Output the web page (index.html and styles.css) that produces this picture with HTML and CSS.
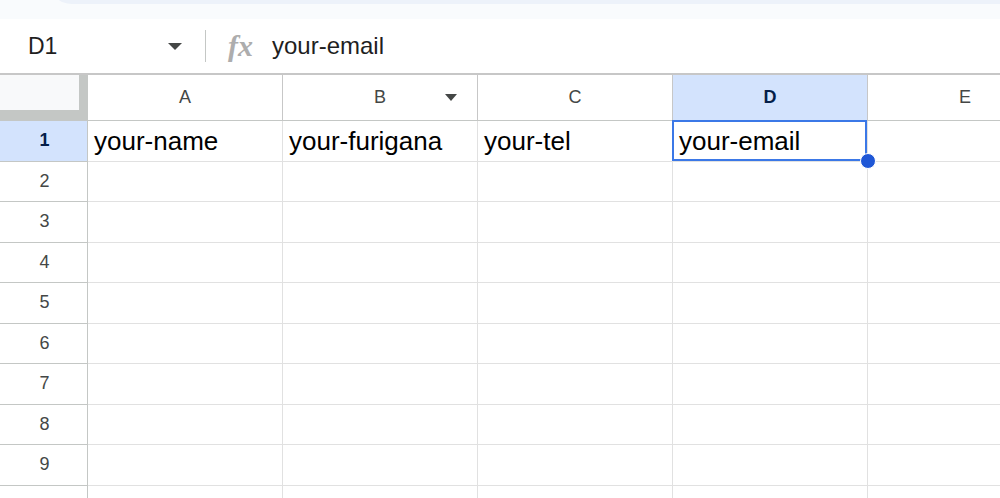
FILE: index.html
```html
<!DOCTYPE html>
<html>
<head>
<meta charset="utf-8">
<link rel="stylesheet" href="styles.css">
</head>
<body>
<div class="app">
  <div class="top"><div class="toolbar"></div></div>
  <div class="fbar">
    <div class="namebox"><span class="ref">D1</span><span class="tri"></span></div>
    <div class="sep"></div>
    <div class="fx">fx</div>
    <div class="formula">your-email</div>
  </div>
  <div class="grid">
    <div class="corner"></div>
    <div class="ch">A</div>
    <div class="ch ch-menu"><span></span><span class="ltr">B</span><span class="tri small"></span></div>
    <div class="ch">C</div>
    <div class="ch sel">D</div>
    <div class="ch">E</div>

    <div class="rh sel">1</div>
    <div class="c">your-name</div>
    <div class="c">your-furigana</div>
    <div class="c">your-tel</div>
    <div class="c active">your-email<span class="box"></span><span class="dot"></span></div>
    <div class="c"></div>

    <div class="rh">2</div><div class="c"></div><div class="c"></div><div class="c"></div><div class="c"></div><div class="c"></div>
    <div class="rh">3</div><div class="c"></div><div class="c"></div><div class="c"></div><div class="c"></div><div class="c"></div>
    <div class="rh">4</div><div class="c"></div><div class="c"></div><div class="c"></div><div class="c"></div><div class="c"></div>
    <div class="rh">5</div><div class="c"></div><div class="c"></div><div class="c"></div><div class="c"></div><div class="c"></div>
    <div class="rh">6</div><div class="c"></div><div class="c"></div><div class="c"></div><div class="c"></div><div class="c"></div>
    <div class="rh">7</div><div class="c"></div><div class="c"></div><div class="c"></div><div class="c"></div><div class="c"></div>
    <div class="rh">8</div><div class="c"></div><div class="c"></div><div class="c"></div><div class="c"></div><div class="c"></div>
    <div class="rh">9</div><div class="c"></div><div class="c"></div><div class="c"></div><div class="c"></div><div class="c"></div>
    <div class="rh">10</div><div class="c"></div><div class="c"></div><div class="c"></div><div class="c"></div><div class="c"></div>
  </div>
</div>
</body>
</html>
```

FILE: styles.css
```css
* { box-sizing: border-box; }
html, body { margin: 0; padding: 0; background: #fff; }
.app {
  width: 1000px;
  height: 498px;
  overflow: hidden;
  font-family: "Liberation Sans", Arial, sans-serif;
}
.top {
  height: 19px;
  background: #f9fbfd;
  overflow: hidden;
}
.toolbar {
  height: 28px;
  margin-top: -24px;
  margin-left: 48px;
  background: #edf2fa;
  border-bottom-left-radius: 24px;
}
.fbar {
  height: 56px;
  display: flex;
  align-items: center;
  border-bottom: 2px solid #c7c7c7;
  background: #fff;
}
.namebox {
  width: 182px;
  padding-left: 28px;
  display: flex;
  align-items: center;
  justify-content: space-between;
  font-size: 23px;
  color: #1f1f1f;
}
.tri {
  width: 0;
  height: 0;
  border-left: 7px solid transparent;
  border-right: 7px solid transparent;
  border-top: 7px solid #444746;
}
.tri.small {
  border-left-width: 6.5px;
  border-right-width: 6.5px;
  border-top-width: 7px;
  justify-self: end;
  margin-right: 20px;
}
.sep {
  width: 1px;
  height: 32px;
  margin-left: 23px;
  background: #c4c7c5;
}
.fx {
  margin-left: 22px;
  font-family: "Liberation Serif", "DejaVu Serif", serif;
  font-style: italic;
  font-weight: bold;
  font-size: 30px;
  color: #adadad;
  line-height: 1;
  width: 26px;
}
.formula {
  margin-left: 18px;
  font-size: 24px;
  color: #1f1f1f;
}
.grid {
  display: grid;
  grid-template-columns: 88px repeat(5, 195px);
  grid-template-rows: 46px repeat(10, 40.5px);
}
.corner {
  background: #f8f9fa;
  border-right: 9px solid #c4c7c5;
  border-bottom: 11px solid #c4c7c5;
}
.ch {
  display: flex;
  align-items: center;
  justify-content: center;
  font-size: 18px;
  color: #444746;
  border-right: 1px solid #c7c7c7;
  border-bottom: 1px solid #c4c7c5;
  background: #fff;
}
.ch-menu {
  display: grid;
  grid-template-columns: 1fr auto 1fr;
  align-items: center;
}
.ch.sel {
  background: #d3e3fd;
  color: #041e49;
  font-weight: bold;
}
.rh {
  display: flex;
  align-items: center;
  justify-content: center;
  font-size: 18px;
  color: #444746;
  border-right: 1px solid #c4c7c5;
  border-bottom: 1px solid #c4c7c5;
  background: #fff;
  padding-left: 2px;
}
.rh.sel {
  background: #d3e3fd;
  color: #041e49;
  font-weight: bold;
}
.c {
  position: relative;
  display: flex;
  align-items: flex-end;
  padding: 0 0 5px 6px;
  font-size: 26px;
  line-height: 29px;
  color: #000;
  border-right: 1px solid #e1e1e1;
  border-bottom: 1px solid #e1e1e1;
  white-space: nowrap;
}
.c.active { z-index: 2; }
.box {
  position: absolute;
  top: -1px;
  left: -1px;
  right: 0;
  bottom: 0;
  border: 2.5px solid #3b78e7;
}
.dot {
  position: absolute;
  right: -8.5px;
  bottom: -8px;
  width: 16px;
  height: 16px;
  border-radius: 50%;
  background: #1f57d6;
  border: 1px solid #fff;
}
```
